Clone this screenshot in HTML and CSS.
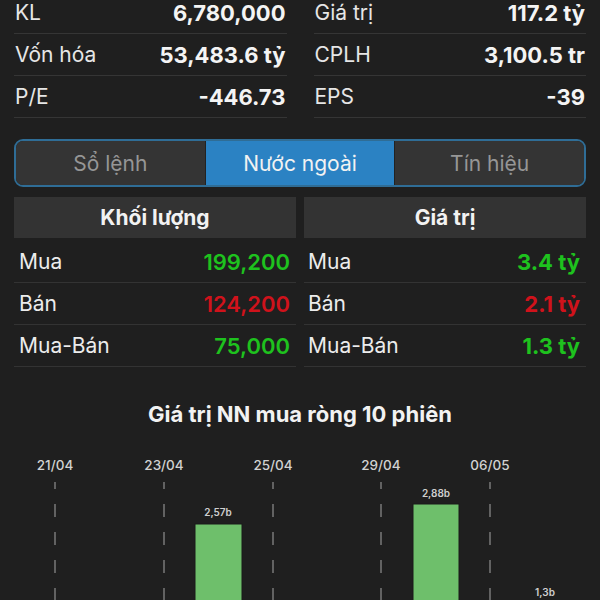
FILE: index.html
```html
<!DOCTYPE html>
<html lang="vi">
<head>
    <meta charset="UTF-8">
    <meta name="viewport" content="width=device-width, initial-scale=1.0">
    <title>Nước ngoài</title>
    <link rel="stylesheet" href="styles.css">
</head>
<body>
    <div class="stats">
        <div class="stats-col">
            <div class="stat-row"><span>KL</span><b>6,780,000</b></div>
            <div class="stat-row"><span>Vốn hóa</span><b>53,483.6 tỷ</b></div>
            <div class="stat-row"><span>P/E</span><b>-446.73</b></div>
        </div>
        <div class="stats-col">
            <div class="stat-row"><span>Giá trị</span><b>117.2 tỷ</b></div>
            <div class="stat-row"><span>CPLH</span><b>3,100.5 tr</b></div>
            <div class="stat-row"><span>EPS</span><b>-39</b></div>
        </div>
    </div>

    <div class="tabs">
        <div class="tab">Sổ lệnh</div>
        <div class="tab active">Nước ngoài</div>
        <div class="tab">Tín hiệu</div>
    </div>

    <div class="tables">
        <div class="table">
            <div class="table-head">Khối lượng</div>
            <div class="table-row"><span>Mua</span><b class="up">199,200</b></div>
            <div class="table-row"><span>Bán</span><b class="down">124,200</b></div>
            <div class="table-row"><span>Mua-Bán</span><b class="up">75,000</b></div>
        </div>
        <div class="table value">
            <div class="table-head">Giá trị</div>
            <div class="table-row"><span>Mua</span><b class="up">3.4 tỷ</b></div>
            <div class="table-row"><span>Bán</span><b class="down">2.1 tỷ</b></div>
            <div class="table-row"><span>Mua-Bán</span><b class="up">1.3 tỷ</b></div>
        </div>
    </div>

    <div class="chart">
        <h3>Giá trị NN mua ròng 10 phiên</h3>
        <svg class="chart-svg" width="600" height="170" viewBox="0 0 600 170">
            <g class="axis-labels">
                <text x="55" y="31">21/04</text>
                <text x="164" y="31">23/04</text>
                <text x="273" y="31">25/04</text>
                <text x="381" y="31">29/04</text>
                <text x="490" y="31">06/05</text>
            </g>
            <g class="grid">
                <line x1="55" y1="43" x2="55" y2="170"/>
                <line x1="164" y1="43" x2="164" y2="170"/>
                <line x1="273" y1="43" x2="273" y2="170"/>
                <line x1="381" y1="43" x2="381" y2="170"/>
                <line x1="490" y1="43" x2="490" y2="170"/>
            </g>
            <rect class="bar" x="195" y="85" width="47" height="90"/>
            <rect class="bar" x="413" y="65" width="46" height="110"/>
            <g class="bar-labels">
                <text x="218" y="77">2,57b</text>
                <text x="436" y="58">2,88b</text>
                <text x="545" y="157">1,3b</text>
            </g>
        </svg>
    </div>
</body>
</html>
```

FILE: styles.css
```css
body { margin: 0; background: #1f1f1f; color: #eee; font-family: Inter, "Noto Sans", sans-serif; overflow: hidden; }

.stats { display: grid; grid-template-columns: 1fr 1fr; gap: 27px; padding: 0 14px; margin-top: -8px; }
.stat-row {
    display: flex;
    justify-content: space-between;
    align-items: center;
    height: 41px;
    border-bottom: 1px solid #353535;
    font-size: 21px;
    padding: 0 1px;
}
.stat-row span { color: #e6e6e6; }
.stat-row b { color: #f4f4f4; font-weight: 700; font-size: 22px; }

.tabs {
    display: flex;
    margin: 21px 14px 0;
    height: 44px;
    border: 2px solid #2f6d96;
    border-radius: 9px;
    overflow: hidden;
}
.tab {
    flex: 1;
    display: flex;
    align-items: center;
    justify-content: center;
    background: #343434;
    color: #969696;
    font-size: 21px;
    border-left: 1px solid #222;
}
.tab:first-child { border-left: none; }
.tab.active { background: #2b82c3; color: #f2f2f2; }

.tables { display: grid; grid-template-columns: 1fr 1fr; gap: 8px; padding: 0 14px; margin-top: 10px; }
.table-head {
    height: 41px;
    display: flex;
    align-items: center;
    justify-content: center;
    background: #333;
    font-size: 21px;
    font-weight: 700;
    color: #f2f2f2;
    margin-bottom: 3px;
}
.table-row {
    display: flex;
    justify-content: space-between;
    align-items: center;
    height: 41px;
    border-bottom: 1px solid #333;
    padding: 0 6px 0 5px;
    font-size: 21px;
}
.table-row span { color: #ececec; }
.table-row b { font-weight: 600; font-size: 22px; }
.table.value .table-row { padding: 0 6px 0 4px; }
.table.value .table-row b { font-weight: 700; }
.up { color: #1ec21e; }
.down { color: #d0121b; }

.chart { padding-top: 34px; }
.chart h3 { margin: 0; text-align: center; font-size: 22px; line-height: 26px; font-weight: 700; color: #f2f2f2; }
.chart-svg { display: block; margin-top: 12px; }
.axis-labels text { fill: #d2d2d2; font-size: 13.5px; font-weight: 500; text-anchor: middle; font-family: Inter, sans-serif; }
.grid line { stroke: #7a7a7a; stroke-width: 1.5; stroke-dasharray: 13 15; stroke-dashoffset: -22; }
.bar { fill: #6ebf6b; stroke: #1a1a1a; stroke-width: 1; }
.bar-labels text { fill: #cfcfcf; font-size: 10px; font-weight: 600; text-anchor: middle; font-family: Inter, sans-serif; }
```
